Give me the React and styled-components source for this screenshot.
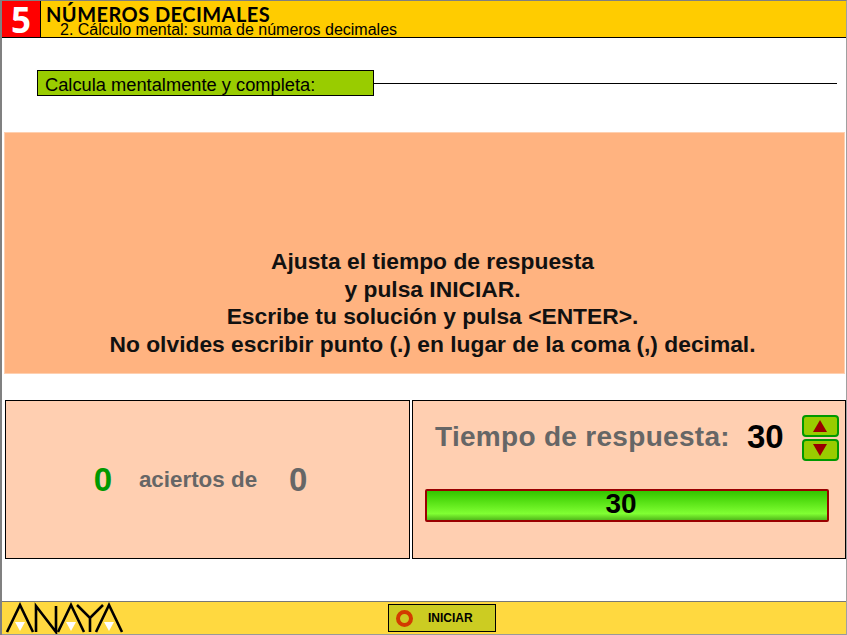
import React from 'react'
import styled, { createGlobalStyle } from 'styled-components'

const GlobalStyle = createGlobalStyle`
  html, body {
    margin: 0;
    padding: 0;
    background: #fff;
  }
  body {
    font-family: "Liberation Sans", Arial, sans-serif;
    overflow: hidden;
  }
`

const Page = styled.div`
  width: 847px;
  height: 635px;
  box-sizing: border-box;
  display: flex;
  flex-direction: column;
  border-top: 1px solid #808080;
  border-left: 2px solid #808080;
  border-right: 1px solid #a0a0a0;
  overflow: hidden;
`

const Header = styled.header`
  height: 37px;
  flex: none;
  box-sizing: border-box;
  display: flex;
  background: #ffcc00;
  border-bottom: 1px solid #000;
`

const UnitBadge = styled.div`
  width: 39px;
  flex: none;
  box-sizing: border-box;
  background: #ff0000;
  border-right: 1px solid #000;
  color: #fff;
  font: 700 35px/38px "Open Sans", sans-serif;
  text-align: center;
`

const HeaderText = styled.div`
  padding-left: 5px;
  display: flex;
  flex-direction: column;
`

const Title = styled.h1`
  margin: 0;
  height: 21px;
  padding-top: 3px;
  color: #000;
  font: 700 20px/21px "Lato", sans-serif;
  letter-spacing: 0.45px;
  white-space: nowrap;
`

const Subtitle = styled.div`
  padding-left: 14px;
  margin-top: -2px;
  color: #000;
  font-size: 16px;
  line-height: 14px;
  white-space: nowrap;
`

const Prompt = styled.div`
  display: flex;
  align-items: center;
  margin: 32px 9px 0 35px;
`

const PromptLabel = styled.div`
  width: 337px;
  height: 26px;
  flex: none;
  box-sizing: border-box;
  padding-left: 7px;
  background: #99cc00;
  border: 1px solid #000;
  color: #000;
  font-size: 18.3px;
  line-height: 27px;
`

const PromptRule = styled.div`
  flex: 1;
  height: 1px;
  background: #000;
`

const MessagePanel = styled.section`
  height: 242px;
  margin: 36px 1px 0 2px;
  box-sizing: border-box;
  padding: 0 0 14px 16px;
  display: flex;
  flex-direction: column;
  justify-content: flex-end;
  background: #ffb380;
  border: 1px solid #ffd0b0;
  color: #111;
  font-size: 22.8px;
  font-weight: 700;
  line-height: 27.8px;
  text-align: center;
  white-space: nowrap;
`

const Panels = styled.div`
  display: flex;
  gap: 2px;
  height: 159px;
  margin: 26px 0 0 3px;
`

const Panel = styled.section`
  box-sizing: border-box;
  background: #ffcfb1;
  border: 1px solid #000;
`

const ScorePanel = styled(Panel)`
  width: 405px;
  display: flex;
  align-items: center;
  justify-content: center;
  padding-right: 14px;
`

const ScoreValue = styled.span`
  width: 20px;
  color: ${props => props.$color};
  font-size: 33px;
  font-weight: 700;
  text-align: center;
`

const ScoreLabel = styled.span`
  margin: 0 31px 0 26px;
  color: #666;
  font-size: 22.4px;
  font-weight: 700;
  white-space: nowrap;
`

const TimePanel = styled(Panel)`
  width: 434px;
  padding: 12px 16px 0 12px;
`

const TimeRow = styled.div`
  display: flex;
  align-items: center;
  height: 49px;
`

const TimeLabel = styled.span`
  margin-left: 10px;
  padding-bottom: 2px;
  color: #666;
  font-size: 28px;
  font-weight: 700;
  letter-spacing: 0.3px;
  white-space: nowrap;
`

const TimeValue = styled.span`
  width: 38px;
  margin-left: 17px;
  padding-bottom: 2px;
  color: #000;
  font-size: 33px;
  font-weight: 700;
`

const Steppers = styled.div`
  display: flex;
  flex-direction: column;
  gap: 2px;
  margin-left: 18px;
`

const StepButton = styled.button`
  width: 37px;
  height: 22px;
  padding: 0;
  display: flex;
  align-items: center;
  justify-content: center;
  box-sizing: border-box;
  background: #99cc00;
  border: 2px solid #009900;
  border-radius: 4px;
`

const Arrow = styled.span`
  width: 0;
  height: 0;
  border-left: 7px solid transparent;
  border-right: 7px solid transparent;
  ${props => props.$up ? 'border-bottom: 12px solid #990000;' : 'border-top: 12px solid #990000;'}
`

const Bar = styled.div`
  height: 33px;
  margin-top: 27px;
  padding-right: 12px;
  box-sizing: border-box;
  background: linear-gradient(#33c400 0%, #50dc10 30%, #80ff33 78%, #52b81a 100%);
  border: 2px solid #990000;
  border-radius: 2px;
  color: #000;
  font-size: 28px;
  font-weight: 700;
  line-height: 26px;
  text-align: center;
`

const Footer = styled.footer`
  height: 34px;
  margin-top: auto;
  flex: none;
  box-sizing: border-box;
  display: flex;
  align-items: center;
  background: #ffd940;
  border-top: 1px solid #777;
  border-bottom: 1px solid #999;
`

const Logo = styled.svg`
  width: 122px;
  height: 32px;
  margin-left: 1px;
  flex: none;
`

const StartButton = styled.button`
  width: 108px;
  height: 28px;
  margin-left: 263px;
  padding: 0 0 0 7px;
  display: flex;
  align-items: center;
  box-sizing: border-box;
  background: #cccc22;
  border: 1px solid #000;
  color: #000;
  font-family: inherit;
  font-size: 12px;
  font-weight: 700;
`

const StartRing = styled.span`
  width: 17px;
  height: 17px;
  flex: none;
  box-sizing: border-box;
  border: 4px solid #d23c00;
  border-radius: 50%;
  margin-right: 15px;
`

const AnayaLogo = () => (
  <Logo viewBox="0 0 122 32" aria-label="ANAYA">
    <g fill="none" stroke="#000" strokeWidth="2.6">
      <path d="M4 30 L17 3 L30 30" />
      <path d="M33 30 V4 L53 30 V4" />
      <path d="M55 30 L68 3 L81 30" />
      <path d="M74 3 L87 16 L100 3 M87 16 V30" />
      <path d="M93 30 L106 3 L119 30" />
    </g>
    <path d="M12 20 H22 L17 29 Z M63 20 H73 L68 29 Z M101 20 H111 L106 29 Z" fill="#fff" />
  </Logo>
)

const App = () => (
  <Page>
    <GlobalStyle />
    <Header>
      <UnitBadge>5</UnitBadge>
      <HeaderText>
        <Title>NÚMEROS DECIMALES</Title>
        <Subtitle>2. Cálculo mental: suma de números decimales</Subtitle>
      </HeaderText>
    </Header>
    <Prompt>
      <PromptLabel>Calcula mentalmente y completa:</PromptLabel>
      <PromptRule />
    </Prompt>
    <MessagePanel>
      <div>Ajusta el tiempo de respuesta</div>
      <div>y pulsa INICIAR.</div>
      <div>Escribe tu solución y pulsa &lt;ENTER&gt;.</div>
      <div>No olvides escribir punto (.) en lugar de la coma (,) decimal.</div>
    </MessagePanel>
    <Panels>
      <ScorePanel>
        <ScoreValue $color="#009900">0</ScoreValue>
        <ScoreLabel>aciertos de</ScoreLabel>
        <ScoreValue $color="#666">0</ScoreValue>
      </ScorePanel>
      <TimePanel>
        <TimeRow>
          <TimeLabel>Tiempo de respuesta:</TimeLabel>
          <TimeValue>30</TimeValue>
          <Steppers>
            <StepButton><Arrow $up /></StepButton>
            <StepButton><Arrow /></StepButton>
          </Steppers>
        </TimeRow>
        <Bar>30</Bar>
      </TimePanel>
    </Panels>
    <Footer>
      <AnayaLogo />
      <StartButton>
        <StartRing />
        INICIAR
      </StartButton>
    </Footer>
  </Page>
)

export default App
